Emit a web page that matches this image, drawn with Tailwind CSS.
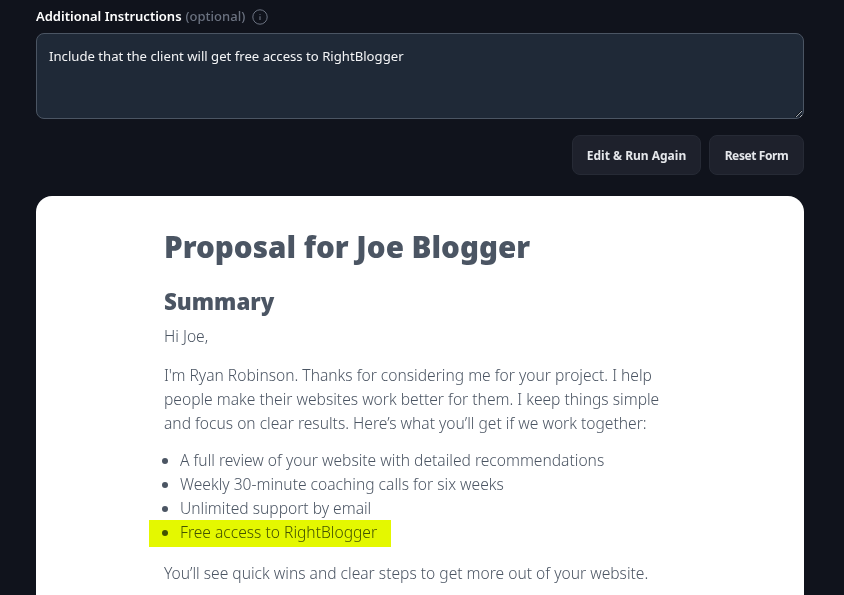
<!DOCTYPE html>
<html lang="en">
<head>
  <meta charset="UTF-8">
  <title>Proposal</title>
  <script src="https://cdn.jsdelivr.net/npm/@tailwindcss/browser@4"></script>
</head>
<body class="bg-[#10131c] font-['Noto_Sans',sans-serif] h-[595px] w-[844px] overflow-hidden">
  <main class="pl-9 pr-10 pt-[8px]">
    <!-- Additional instructions -->
    <div class="flex items-center h-[18px] text-[13px] font-semibold text-white">
      Additional Instructions
      <span class="ml-1 font-medium text-[#6b7280]">(optional)</span>
      <svg class="ml-[7px] w-4 h-4 text-[#6b7280]" viewBox="0 0 16 16" fill="none" stroke="currentColor">
        <circle cx="8" cy="8" r="7.2" stroke-width="1"/>
        <path d="M8 7.3v3.6M8 5v.8" stroke-width="1.1"/>
      </svg>
    </div>
    <textarea class="mt-[7px] block w-full h-[86px] px-3 py-[12px] bg-[#1f2937] border border-[#4b5563] rounded-lg text-[13.15px] leading-[20px] text-[#f3f4f6] resize-y">Include that the client will get free access to RightBlogger</textarea>

    <div class="flex justify-end gap-2 mt-[16px]">
      <button class="h-10 w-[129px] pt-px rounded-lg border border-[#262a35] bg-[#1e212c] text-xs font-bold text-[#e5e7eb]">Edit &amp; Run Again</button>
      <button class="h-10 w-[95px] pt-px rounded-lg border border-[#262a35] bg-[#1e212c] text-xs font-bold tracking-[-0.4px] text-[#e5e7eb]">Reset Form</button>
    </div>

    <!-- Result -->
    <article class="relative mt-[21px] h-[500px] bg-white rounded-t-2xl pl-[128px] pr-[140px] pt-[31px] text-[#4b5563] font-light text-[15.6px] leading-6">
      <h1 class="text-[29.6px] leading-[40px] font-black">Proposal for Joe Blogger</h1>
      <h2 class="mt-[20px] text-[22.3px] leading-[30px] font-black">Summary</h2>
      <p class="mt-[7px]">Hi Joe,</p>
      <p class="mt-[15px]">I'm Ryan Robinson. Thanks for considering me for your project. I help people make their websites work better for them. I keep things simple and focus on clear results. Here’s what you’ll get if we work together:</p>
      <ul class="mt-[13px] list-disc pl-4">
        <li>A full review of your website with detailed recommendations</li>
        <li>Weekly 30-minute coaching calls for six weeks</li>
        <li>Unlimited support by email</li>
        <li>Free access to RightBlogger</li>
      </ul>
      <p class="mt-[17px]">You’ll see quick wins and clear steps to get more out of your website.</p>
      <!-- highlighter mark over the last bullet -->
      <div class="absolute left-[113px] top-[324px] w-[242px] h-[27px] bg-[#e4f800] mix-blend-multiply"></div>
    </article>
  </main>
</body>
</html>
